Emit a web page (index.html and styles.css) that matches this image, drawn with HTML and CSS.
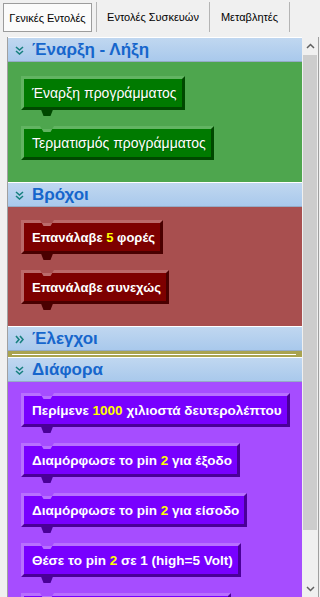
FILE: index.html
```html
<!DOCTYPE html>
<html lang="el">
<head>
    <meta charset="UTF-8">
    <meta name="viewport" content="width=device-width, initial-scale=1.0">
    <title>Εντολές</title>
    <link rel="stylesheet" href="styles.css">
</head>
<body>
    <!-- Tabs -->
    <div class="tabs">
        <div class="tab tab-active">Γενικές Εντολές</div>
        <div class="tab tab-devices">Εντολές Συσκευών</div>
        <div class="tab tab-vars">Μεταβλητές</div>
    </div>

    <div class="panel">
        <div class="content">
            <div class="cat-header">
                <svg class="chev" width="9" height="9" viewBox="0 0 9 9"><polyline points="1,1 4.5,4 8,1"/><polyline points="1,5 4.5,8 8,5"/></svg>
                <span>Έναρξη - Λήξη</span>
            </div>
            <div class="cat-body green">
                <div class="block no-notch">Έναρξη προγράμματος</div>
                <div class="block no-tab">Τερματισμός προγράμματος</div>
            </div>

            <div class="cat-header">
                <svg class="chev" width="9" height="9" viewBox="0 0 9 9"><polyline points="1,1 4.5,4 8,1"/><polyline points="1,5 4.5,8 8,5"/></svg>
                <span>Βρόχοι</span>
            </div>
            <div class="cat-body red">
                <div class="block">Επανάλαβε&nbsp;<b class="num">5</b>&nbsp;φορές</div>
                <div class="block">Επανάλαβε συνεχώς</div>
            </div>

            <div class="cat-header">
                <svg class="chev" width="9" height="9" viewBox="0 0 9 9"><polyline points="1,1 4,4.5 1,8"/><polyline points="5,1 8,4.5 5,8"/></svg>
                <span>Έλεγχοι</span>
            </div>
            <div class="cat-closed"><div class="closed-line"></div></div>

            <div class="cat-header">
                <svg class="chev" width="9" height="9" viewBox="0 0 9 9"><polyline points="1,1 4.5,4 8,1"/><polyline points="1,5 4.5,8 8,5"/></svg>
                <span>Διάφορα</span>
            </div>
            <div class="cat-body purple">
                <div class="block">Περίμενε&nbsp;<b class="num">1000</b>&nbsp;χιλιοστά δευτερολέπτου</div>
                <div class="block">Διαμόρφωσε το pin&nbsp;<b class="num">2</b>&nbsp;για έξοδο</div>
                <div class="block">Διαμόρφωσε το pin&nbsp;<b class="num">2</b>&nbsp;για είσοδο</div>
                <div class="block">Θέσε το pin&nbsp;<b class="num">2</b>&nbsp;σε 1 (high=5 Volt)</div>
                <!-- next block, only its top edge is visible -->
                <div class="block block-cut"></div>
            </div>
        </div>

        <!-- Scrollbar -->
        <div class="scrollbar">
            <div class="sb-btn">
                <svg width="9" height="6" viewBox="0 0 9 6"><polyline points="1,5 4.5,1.5 8,5"/></svg>
            </div>
            <div class="sb-thumb"></div>
            <div class="sb-track"></div>
            <div class="sb-btn">
                <svg width="9" height="6" viewBox="0 0 9 6"><polyline points="1,1 4.5,4.5 8,1"/></svg>
            </div>
        </div>
    </div>
</body>
</html>
```

FILE: styles.css
```css
body {
    margin: 0;
    width: 320px;
    height: 597px;
    overflow: hidden;
    background-color: #f0f0f0;
    font-family: "Liberation Sans", Arial, sans-serif;
}
.tabs {
    display: flex;
    height: 37px;
    box-sizing: border-box;
    padding-top: 2px;
}
.tab {
    height: 30px;
    box-sizing: border-box;
    display: flex;
    align-items: center;
    justify-content: center;
    font-size: 11px;
    color: #000;
    border-right: 1px solid #b4b4b4;
}
.tab-active {
    margin: 1px 4px 0 3px;
    width: 89px;
    height: 29px;
    border: 1px solid #9c9c9c;
    background-color: #fbfbfb;
}
.tab-devices {
    width: 114px;
    border-left: 1px solid #b4b4b4;
}
.tab-vars {
    width: 80px;
}
.panel {
    display: flex;
    height: 560px;
    width: 312px;
    margin-left: 7px;
    box-sizing: border-box;
    border-left: 1px solid #a0a0a0;
    border-right: 1px solid #a0a0a0;
}
.content {
    width: 294px;
    overflow: hidden;
}
.cat-header {
    height: 25px;
    box-sizing: border-box;
    display: flex;
    align-items: center;
    border-top: 1px solid #fff;
    border-bottom: 1px solid #95abc6;
    background: linear-gradient(#c0d7f0, #a9c9ec);
    color: #1666cc;
    font-size: 17px;
    font-weight: bold;
}
.chev {
    margin: 1px 8px 0 7px;
    fill: none;
    stroke: #17807f;
    stroke-width: 1.6;
}
.cat-body {
    padding-left: 13px;
    box-sizing: border-box;
}
.green {
    height: 120px;
    padding-top: 14px;
    background-color: #4ea64e;
    --main: #007a00;
    --light: #62b462;
    --dark: #004800;
}
.red {
    height: 119px;
    padding-top: 13px;
    background-color: #a84f4f;
    --main: #7d0000;
    --light: #bb6a6a;
    --dark: #4a0000;
}
.purple {
    height: 300px;
    padding-top: 11px;
    background-color: #a64dff;
    --main: #7800ff;
    --light: #b870ff;
    --dark: #4a0098;
}
.cat-closed {
    height: 6px;
    background-color: #a9a34f;
    display: flex;
    align-items: center;
}
.closed-line {
    height: 1px;
    width: 284px;
    margin-left: 4px;
    background-color: #fff;
}
.block {
    position: relative;
    width: fit-content;
    height: 34px;
    box-sizing: border-box;
    margin-bottom: 16px;
    padding: 0 5px 0 8px;
    display: flex;
    align-items: center;
    white-space: nowrap;
    background-color: var(--main);
    border: 3px solid;
    border-color: var(--light) var(--dark) var(--dark) var(--light);
    color: #fff;
    font-size: 13px;
    font-weight: bold;
}
.green .block {
    font-size: 14px;
    font-weight: normal;
    text-shadow: 1px 1px 0 rgba(0, 0, 0, 0.25);
}
.purple .block {
    font-size: 13.5px;
}
.block-cut {
    width: 210px;
}
.block::before {
    content: "";
    position: absolute;
    top: -3px;
    left: 16px;
    width: 14px;
    height: 6px;
    background: linear-gradient(var(--bg, transparent) 0 3px, var(--light) 3px);
    clip-path: polygon(0 0, 100% 0, 75% 100%, 25% 100%);
}
.green .block::before { --bg: #4ea64e; }
.red .block::before { --bg: #a84f4f; }
.purple .block::before { --bg: #a64dff; }
.block::after {
    content: "";
    position: absolute;
    bottom: -9px;
    left: 16px;
    width: 14px;
    height: 9px;
    background: var(--dark);
    clip-path: polygon(0 0, 100% 0, 75% 100%, 25% 100%);
}
.no-notch::before,
.no-tab::after {
    display: none;
}
.num {
    color: #ffff00;
}
.scrollbar {
    width: 16px;
    display: flex;
    flex-direction: column;
    background-color: #f0f0f0;
}
.sb-btn {
    height: 17px;
    display: flex;
    align-items: center;
    justify-content: center;
}
.sb-btn svg {
    fill: none;
    stroke: #606060;
    stroke-width: 1.5;
}
.sb-thumb {
    height: 475px;
    margin: 1px;
    background-color: #cdcdcd;
}
.sb-track {
    flex: 1;
}
```
